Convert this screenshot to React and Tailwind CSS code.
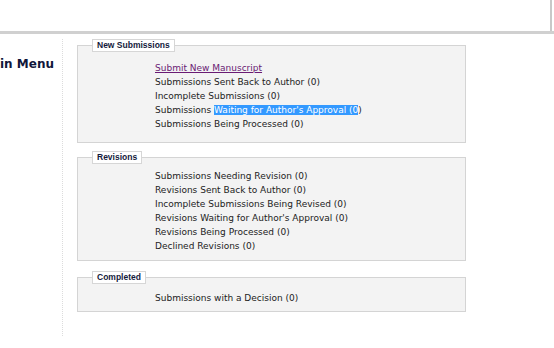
const font = { fontFamily: '"DejaVu Sans", Verdana, sans-serif' };

function Box({ title, children, className, body }) {
    return (
        <fieldset className={`w-[389px] border border-[#d4d4d4] bg-[#f3f3f3] ${className}`}>
            <legend
                className="ml-[14px] px-[4px] border border-[#d6d6d6] bg-white text-[8.5px] leading-[11px] font-bold text-[#141a3c]"
                style={{ fontFamily: '"Liberation Sans", Arial, sans-serif' }}
            >
                {title}
            </legend>
            <div className={`pl-[77px] flex flex-col text-[9px] leading-[14px] text-[#222] ${body}`}>
                {children}
            </div>
        </fieldset>
    );
}

export default function App() {
    return (
        <div className="w-[554px] h-[348px] bg-white overflow-hidden" style={font}>
            <div className="border-b-[3px] border-[#d0d0d0]">
                <div className="w-[552px] h-[31px] border-r-2 border-[#c8c8c8]" />
            </div>
            <div className="flex">
                <div className="w-[63px] h-[297px] mt-[5px] border-r border-dotted border-[#dcdcdc] shrink-0">
                    <div className="mt-[16px] text-[12px] font-bold text-[#10163a] whitespace-nowrap">in Menu</div>
                </div>
                <div className="ml-[14px] pt-[5px] flex flex-col">
                    <Box title="New Submissions" body="pt-[9px] pb-[11px]">
                        <a href="#" className="text-[#6a1b74] underline w-fit">Submit New Manuscript</a>
                        <span>Submissions Sent Back to Author (0)</span>
                        <span>Incomplete Submissions (0)</span>
                        <span>
                            Submissions <span className="bg-[#3399ff] text-white">Waiting for Author's Approval (0</span>)
                        </span>
                        <span>Submissions Being Processed (0)</span>
                    </Box>
                    <Box title="Revisions" className="mt-[8px]" body="pt-[5px] pb-[7px]">
                        <span>Submissions Needing Revision (0)</span>
                        <span>Revisions Sent Back to Author (0)</span>
                        <span>Incomplete Submissions Being Revised (0)</span>
                        <span>Revisions Waiting for Author's Approval (0)</span>
                        <span>Revisions Being Processed (0)</span>
                        <span>Declined Revisions (0)</span>
                    </Box>
                    <Box title="Completed" className="mt-[10px]" body="pt-[7px] pb-[6px]">
                        <span>Submissions with a Decision (0)</span>
                    </Box>
                </div>
            </div>
        </div>
    );
}
